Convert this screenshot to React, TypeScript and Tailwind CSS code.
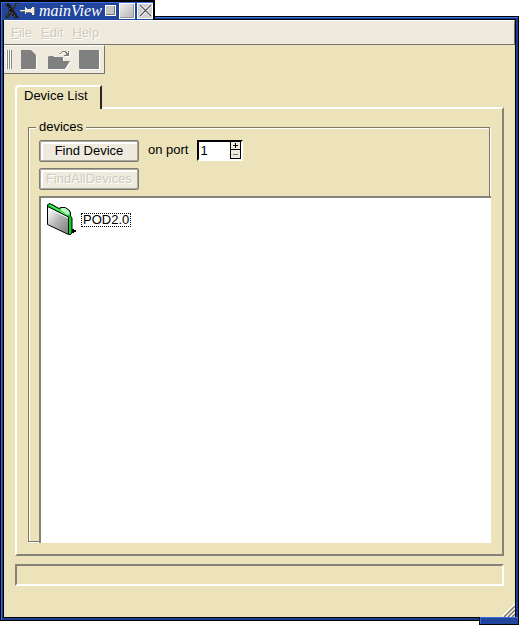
import type { ReactNode } from "react";

const MENUS = ["File", "Edit", "Help"];

function TitleBar() {
  return (
    <div className="relative z-10 -mb-1 flex h-5 w-[155px] items-center border-t-2 border-l border-r-2 border-black bg-[#21459c] pb-px pl-1 shadow-[inset_1px_1px_0_#3a6be0]">
      <svg width="14" height="15" viewBox="0 0 14 15" className="shrink-0" shapeRendering="crispEdges" aria-hidden="true">
        <path d="M0 0h4l10 15H9z" fill="#1c1c1c" />
        <path d="M14 0h-2L8 6M5 8l-5 7h2l5-6" fill="none" stroke="#2b2b2b" strokeWidth="2" />
        <path d="M1 0l9 14M12 1L8 6M5 9l-4 5" stroke="#6b6b6b" strokeDasharray="1 2" />
      </svg>
      <svg width="15" height="10" viewBox="0 0 15 10" className="ml-px shrink-0" shapeRendering="crispEdges" aria-hidden="true">
        <path d="M0 4h5v1H0zM5 1h1v7H5zM6 2h1v5H6zM7 3h4v3H7zM11 2h1v5h-1zM12 1h2v8h-2z" fill="#eeeade" />
        <path d="M0 5h5v1H0zM6 6h5v1H6zM14 1h1v8h-1z" fill="#77756c" />
      </svg>
      <h1 className="ml-1 w-[66px] font-['Liberation_Serif',serif] text-[16px] leading-4 text-white italic">
        mainView
      </h1>
      <button aria-label="Minimize" className="size-[11px] shrink-0 border border-white bg-[#c4c4c4] shadow-[inset_-1px_-1px_0_#777]" />
      <button
        aria-label="Maximize"
        className="ml-[3px] size-4 shrink-0 border border-white bg-linear-to-br from-[#eeeeee] to-[#b4b4b4] shadow-[inset_-1px_-1px_0_#999]"
      />
      <button
        aria-label="Close"
        className="ml-0.5 flex size-4 shrink-0 items-center justify-center border border-white bg-[#cfcfcf]"
      >
        <svg width="13" height="13" viewBox="0 0 13 13" aria-hidden="true">
          <path d="M1 1l11 11M12 1L1 12" stroke="#fff" strokeWidth="3" />
          <path d="M1 1l11 11M12 1L1 12" stroke="#555" strokeWidth="1.3" />
        </svg>
      </button>
    </div>
  );
}

function MenuBar() {
  return (
    <nav className="flex h-[25px] items-center gap-[9px] border-t border-r border-b border-t-white border-r-[#77756c] border-b-[#77756c] bg-[#eeeade] pl-[7px]">
      {MENUS.map((name) => (
        <button key={name} disabled className="text-[#cfcbbd] [text-shadow:1px_1px_0_#fff]">
          <span className="underline">{name[0]}</span>
          {name.slice(1)}
        </button>
      ))}
    </nav>
  );
}

function ToolButton({ label, children }: { label: string; children: ReactNode }) {
  return (
    <button disabled aria-label={label} className="shrink-0">
      <svg width="24" height="22" viewBox="0 0 24 22" aria-hidden="true">
        <g fill="#fff" transform="translate(1 1)">{children}</g>
        <g fill="#808080">{children}</g>
      </svg>
    </button>
  );
}

function ToolBar() {
  return (
    <div className="flex h-[29px] w-[101px] items-center border-t border-r border-b border-t-white border-r-[#77756c] border-b-[#77756c] bg-[#eeeade] pl-[3px]">
      <div className="flex gap-px">
        <span className="h-[19px] w-px bg-[#8b897f] shadow-[-1px_0_0_#fff]" />
        <span className="h-[19px] w-px bg-[#8b897f] shadow-[-1px_0_0_#fff]" />
        <span className="h-[19px] w-px bg-[#8b897f] shadow-[-1px_0_0_#fff]" />
      </div>
      <div className="ml-[6px] flex gap-[6px]">
        <ToolButton label="New">
          <path d="M3 1h10l5 5v14H3z" />
        </ToolButton>
        <ToolButton label="Open">
          <path d="M0 8l1-1h4l1 1h9v4h7l-5 8H0z" />
          <path d="M12 4h1V3h1V2h4v1h1v1h1V2h1v5h-5V6h2V4h-1V3h-3v1h-1v1h-2z" />
        </ToolButton>
        <ToolButton label="Save">
          <path d="M1 1h20v19H2l-1-1z" />
        </ToolButton>
      </div>
    </div>
  );
}

function PushButton({ disabled, children }: { disabled?: boolean; children: ReactNode }) {
  return (
    <button
      disabled={disabled}
      className="h-[22px] w-[100px] rounded-[2px] border border-[#7d7b72] bg-[#eeeade] leading-5 shadow-[inset_1px_1px_0_#aaa79b,inset_-1px_-1px_0_#aaa79b,inset_3px_3px_0_#fff] disabled:text-[#cfcbbd] disabled:[text-shadow:1px_1px_0_#fff]"
    >
      {children}
    </button>
  );
}

function PortSpinner() {
  return (
    <div className="flex h-[21px] w-[46px] border-t-2 border-r-2 border-b-2 border-l-2 border-t-black border-r-white border-b-white border-l-black bg-white">
      <input id="port" defaultValue="1" className="w-[31px] min-w-0 bg-white pl-px leading-4 outline-none" />
      <div className="flex flex-col gap-px bg-black px-px pb-px">
        <button aria-label="Increase" className="flex h-[7px] w-[9px] items-center justify-center bg-[#eeeade]">
          <svg width="7" height="7" viewBox="0 0 7 7" shapeRendering="crispEdges" aria-hidden="true">
            <path d="M3 1h1v5H3zM1 3h5v1H1z" />
          </svg>
        </button>
        <button aria-label="Decrease" className="flex h-[8px] w-[9px] items-center justify-center bg-[#eeeade]">
          <svg width="7" height="7" viewBox="0 0 7 7" shapeRendering="crispEdges" aria-hidden="true">
            <path d="M1 3h5v1H1z" fill="#77756c" />
          </svg>
        </button>
      </div>
    </div>
  );
}

function FolderIcon() {
  return (
    <svg width="32" height="34" viewBox="0 0 32 34" aria-hidden="true">
      <defs>
        <linearGradient id="folder" x1="0" y1="0" x2="1" y2="1">
          <stop offset="0.15" stopColor="#f0f0f0" />
          <stop offset="0.5" stopColor="#b5b5b5" />
          <stop offset="0.9" stopColor="#858585" />
        </linearGradient>
      </defs>
      <path d="M24 25h3v1h2v1h2v2h-2v1h-3v2h-2z" />
      <path
        d="M2.5 4V2L4 .5l3 1 7 4 2-1h4l4 2.5 1.500 2.500v3.500L27 15v15l-2 1.500z"
        fill="#00c81e"
        stroke="#000"
      />
      <path d="M15 6l2-1h3l4 3 .5 4-3-1-4-2.500z" fill="#c4f5c4" />
      <path d="M4.500 2l10 5.500 4 3 5 1.500" fill="none" stroke="#8aee8f" />
      <path d="M2.500 3.500l21 10.500v17.500L2.500 21.500z" fill="url(#folder)" stroke="#000" />
      <path d="M3.500 5.200l19.500 9.800" stroke="#fff" />
      <path d="M25 14v17" stroke="#00e020" strokeWidth="1.500" />
    </svg>
  );
}

function DeviceGroup() {
  return (
    <fieldset className="flex min-w-0 flex-1 flex-col border border-[#7b7869] pl-[10px] shadow-[inset_1px_1px_0_#fff,1px_1px_0_#fff]">
      <legend className="-ml-[3px] bg-[#ece3bb] px-[3px] leading-4">devices</legend>
      <div className="flex items-start gap-[9px] pt-[5px]">
        <PushButton>Find Device</PushButton>
        <label htmlFor="port" className="leading-5">
          on port
        </label>
        <PortSpinner />
      </div>
      <div className="mt-[6px]">
        <PushButton disabled>FindAllDevices</PushButton>
      </div>
      <ul className="-mr-0.5 -mb-0.5 mt-[6px] flex-1 border-t-2 border-l-2 border-[#85837a] bg-white pt-[5px] pl-1">
        <li className="flex items-center gap-1">
          <FolderIcon />
          <a href="#pod" className="border border-dotted border-black px-px leading-3 text-black">
            POD2.0
          </a>
        </li>
      </ul>
    </fieldset>
  );
}

export default function App() {
  return (
    <div className="relative flex h-screen flex-col bg-white pb-1 font-['Liberation_Sans',Arial,sans-serif] text-[13px] leading-4 text-black">
      <TitleBar />
      <div className="flex min-h-0 flex-1 flex-col border border-black bg-[#1c3c8c] p-0.5 shadow-[inset_1px_1px_0_#3a6be0]">
        <div className="relative flex min-h-0 flex-1 flex-col border border-black bg-[#ece3bb]">
          <MenuBar />
          <ToolBar />
          <main className="flex min-h-0 flex-1 flex-col px-[11px] pt-[11px] pb-[31px]">
            <div role="tablist" className="z-10 -mb-0.5 flex">
              <button
                role="tab"
                aria-selected="true"
                className="h-6 rounded-tl-[4px] border-t-2 border-r-2 border-l-2 border-t-white border-r-[#2a2823] border-l-white bg-[#ece3bb] pr-3 pb-1 pl-[7px]"
              >
                Device List
              </button>
            </div>
            <section className="flex min-h-0 flex-1 flex-col border-2 border-t-white border-r-[#85837a] border-b-[#85837a] border-l-white pt-[10px] pr-3 pb-3 pl-[11px]">
              <DeviceGroup />
            </section>
            <div role="status" className="mt-2 h-[22px] border-2 border-t-[#85837a] border-r-white border-b-white border-l-[#85837a]" />
          </main>
          <svg width="13" height="13" viewBox="0 0 13 13" className="absolute right-0 bottom-0" aria-hidden="true">
            <path d="M0 13L13 0M4 13l9-9M8 13l5-5" stroke="#fff" strokeWidth="1.500" />
            <path d="M2 13L13 2M6 13l7-7M10 13l3-3" stroke="#77756c" strokeWidth="1.500" />
          </svg>
        </div>
      </div>
      <div className="absolute right-0 bottom-0 h-2 w-10 border-r border-b border-l border-black bg-[#21459c] shadow-[inset_1px_1px_0_#3a6be0]" />
    </div>
  );
}
